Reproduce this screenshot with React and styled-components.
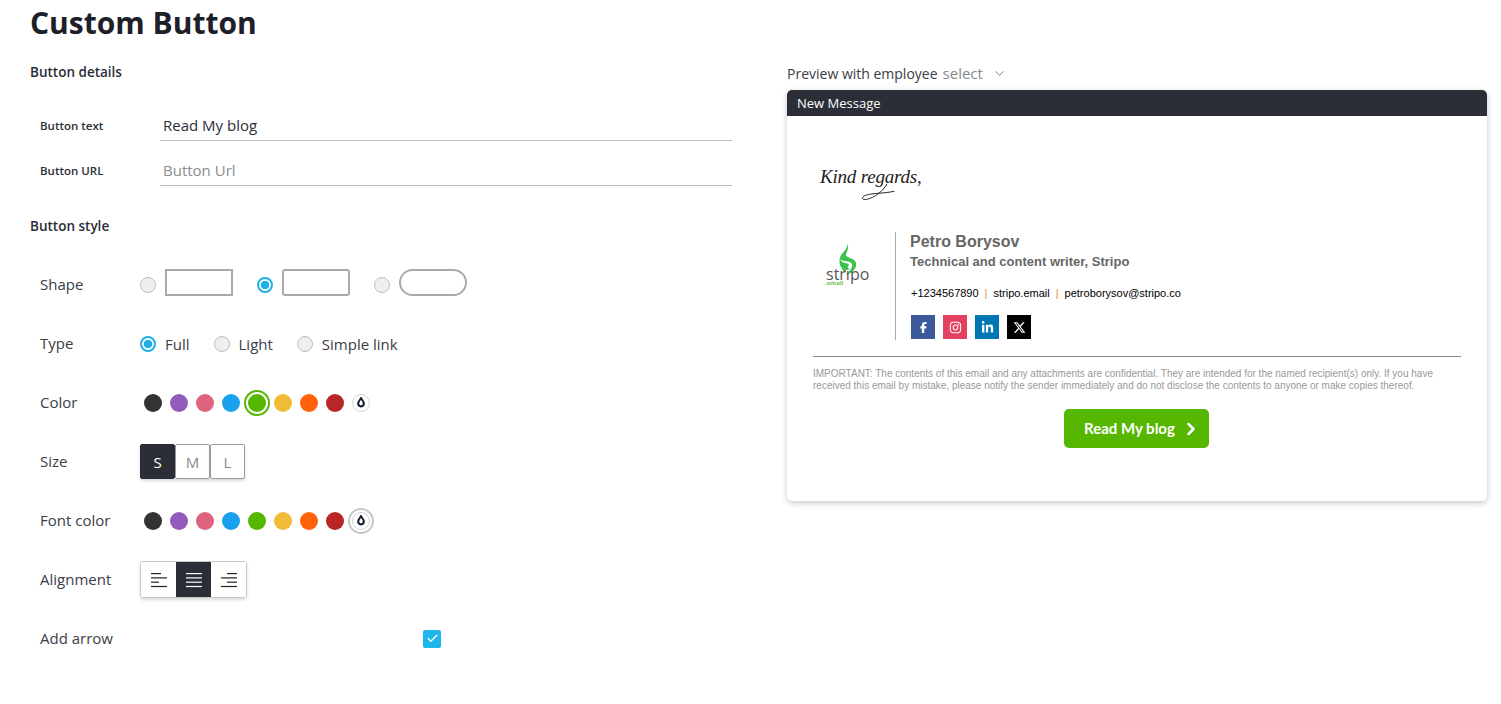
import React from "react";
import styled, { createGlobalStyle } from "styled-components";
import { FaFacebookF, FaInstagram, FaLinkedinIn, FaXTwitter } from "react-icons/fa6";
import { ChevronDown, ChevronRight, Check } from "lucide-react";

const COLORS = ["#333333", "#935cbb", "#e0637d", "#1ba1ec", "#55b700", "#f0bc35", "#ff6208", "#b82626"];

const GlobalStyle = createGlobalStyle`
  body {
    margin: 0;
    background: #fff;
    font-family: "Open Sans", "Lato", sans-serif;
    color: #2b2e37;
  }
`;

const Drop = () => (
  <svg width="10" height="11" viewBox="0 0 10 11">
    <path d="M5 1.2 C5.8 2.8 7.8 4.2 7.8 6.6 A2.8 2.8 0 0 1 2.2 6.6 C2.2 4.2 4.2 2.8 5 1.2 Z" fill="none" stroke="#101a2c" strokeWidth="2" />
  </svg>
);

const AlignIcon = ({ widths, side, color }) => (
  <svg width="16" height="16" viewBox="0 0 16 16">
    {widths.map((w, i) => {
      const x = side === "left" ? 0 : side === "right" ? 16 - w : (16 - w) / 2;
      return <rect key={i} x={x} y={1 + i * 4.3} width={w} height="1.2" fill={color} />;
    })}
  </svg>
);

const Palette = ({ selected, ring }) => (
  <Swatches>
    {COLORS.map((c) => (
      <SwatchCell key={c} $ring={selected === c ? c : null}>
        <Swatch $color={c} />
      </SwatchCell>
    ))}
    <SwatchCell $ring={ring}>
      <NoColor>
        <Drop />
      </NoColor>
    </SwatchCell>
  </Swatches>
);

const App = () => {
  return (
    <Page>
      <GlobalStyle />
      <LeftColumn>
        <Title>Custom Button</Title>
        <SectionTitle>Button details</SectionTitle>
        <Fields>
          <Field>
            <FieldLabel>Button text</FieldLabel>
            <FieldValue>Read My blog</FieldValue>
          </Field>
          <Field>
            <FieldLabel>Button URL</FieldLabel>
            <FieldValue $placeholder>Button Url</FieldValue>
          </Field>
        </Fields>
        <SectionTitle $top={30}>Button style</SectionTitle>
        <StyleRows>
          <StyleRow>
            <RowLabel>Shape</RowLabel>
            <Options>
              <Option>
                <Radio />
                <ShapeBox $radius={0} />
              </Option>
              <Option>
                <Radio $checked />
                <ShapeBox $radius={3} />
              </Option>
              <Option>
                <Radio />
                <ShapeBox $radius={14} />
              </Option>
            </Options>
          </StyleRow>
          <StyleRow>
            <RowLabel>Type</RowLabel>
            <Options>
              <Option>
                <Radio $checked />
                Full
              </Option>
              <Option>
                <Radio />
                Light
              </Option>
              <Option>
                <Radio />
                Simple link
              </Option>
            </Options>
          </StyleRow>
          <StyleRow>
            <RowLabel>Color</RowLabel>
            <Palette selected="#55b700" />
          </StyleRow>
          <StyleRow>
            <RowLabel>Size</RowLabel>
            <Segmented>
              <Segment $active>S</Segment>
              <Segment>M</Segment>
              <Segment>L</Segment>
            </Segmented>
          </StyleRow>
          <StyleRow>
            <RowLabel>Font color</RowLabel>
            <Palette ring="#c8c8c8" />
          </StyleRow>
          <StyleRow>
            <RowLabel>Alignment</RowLabel>
            <AlignGroup>
              <AlignCell>
                <AlignIcon widths={[10, 16, 8, 16]} side="left" color="#222" />
              </AlignCell>
              <AlignCell $active>
                <AlignIcon widths={[16, 16, 16, 16]} side="center" color="#fff" />
              </AlignCell>
              <AlignCell>
                <AlignIcon widths={[10, 16, 10, 16]} side="right" color="#222" />
              </AlignCell>
            </AlignGroup>
          </StyleRow>
          <StyleRow>
            <RowLabel>Add arrow</RowLabel>
            <Checkbox>
              <Check size={13} color="#fff" strokeWidth={2.5} />
            </Checkbox>
          </StyleRow>
        </StyleRows>
      </LeftColumn>
      <RightColumn>
        <PreviewBar>
          Preview with employee
          <SelectText>select</SelectText>
          <ChevronDown size={15} color="#777" strokeWidth={1.5} />
        </PreviewBar>
        <Card>
          <CardHeader>New Message</CardHeader>
          <CardBody>
            <Regards>
              <RegardsText>Kind regards,</RegardsText>
              <Flourish width="36" height="18" viewBox="0 0 44 22">
                <path d="M33 1 C28 10 18 18 8 20 C2 21 1 17 7 15 C16 12 30 13 42 10" fill="none" stroke="#222" strokeWidth="1.2" />
              </Flourish>
            </Regards>
            <Signature>
              <LogoCell>
                <Logo>
                  <Flame width="20" height="34" viewBox="0 0 20 34">
                    <path d="M10 0 C12 6 4 9 3 15 C2 19 14 17 15 21 C16 25 12 28 9 32 C15 30 20 26 19 20 C18 15 9 15 9 12 C9 9 13 6 10 0 Z" fill="#3cc14a" />
                    <path d="M3 15 C3 19 8 20 12 21 C11 25 9 27 8 30 C5 26 1 21 3 15 Z" fill="#3cc14a" />
                  </Flame>
                  <LogoWord>stripo</LogoWord>
                  <LogoSub>.email</LogoSub>
                </Logo>
              </LogoCell>
              <Info>
                <Name>Petro Borysov</Name>
                <Role>Technical and content writer, Stripo</Role>
                <Contacts>
                  +1234567890<Sep>|</Sep>stripo.email<Sep>|</Sep>petroborysov@stripo.co
                </Contacts>
                <Socials>
                  <Social $bg="#3b5998"><FaFacebookF size={11} /></Social>
                  <Social $bg="#e4405f"><FaInstagram size={13} /></Social>
                  <Social $bg="#0077b5"><FaLinkedinIn size={13} /></Social>
                  <Social $bg="#000"><FaXTwitter size={13} /></Social>
                </Socials>
              </Info>
            </Signature>
            <Divider />
            <Disclaimer>
              IMPORTANT: The contents of this email and any attachments are confidential. They are intended for the named recipient(s) only. If you have received this email by mistake, please notify the sender immediately and do not disclose the contents to anyone or make copies thereof.
            </Disclaimer>
            <CtaRow>
              <Cta>
                <CtaText>Read My blog</CtaText>
                <ChevronRight size={20} strokeWidth={3} />
              </Cta>
            </CtaRow>
          </CardBody>
        </Card>
      </RightColumn>
    </Page>
  );
};

const Page = styled.div`
  display: flex;
  width: 1501px;
  height: 704px;
  overflow: hidden;
  box-sizing: border-box;
  padding-left: 30px;
`;

const LeftColumn = styled.div`
  width: 702px;
  flex-shrink: 0;
`;

const Title = styled.h1`
  margin: 0;
  font-size: 30px;
  line-height: 46px;
  font-weight: 700;
  color: #1e2029;
`;

const SectionTitle = styled.h2`
  margin: ${(p) => p.$top || 16}px 0 0;
  font-size: 13.5px;
  line-height: 20px;
  font-weight: 600;
  color: #2b2e37;
`;

const Fields = styled.div`
  display: flex;
  flex-direction: column;
  gap: 15px;
  margin-top: 29px;
`;

const Field = styled.div`
  display: flex;
  align-items: center;
  padding-left: 10px;
`;

const FieldLabel = styled.label`
  width: 120px;
  flex-shrink: 0;
  padding-bottom: 2px;
  font-size: 11.5px;
  font-weight: 600;
`;

const FieldValue = styled.div`
  flex: 1;
  height: 29px;
  line-height: 29px;
  padding-left: 3px;
  border-bottom: 1px solid #bdbdbd;
  font-size: 15px;
  color: ${(p) => (p.$placeholder ? "#8a8d93" : "#2b2e37")};
`;

const StyleRows = styled.div`
  display: flex;
  flex-direction: column;
  margin-top: 19px;
  padding-left: 10px;
`;

const StyleRow = styled.div`
  display: flex;
  align-items: center;
  height: 59px;
`;

const RowLabel = styled.div`
  width: 100px;
  flex-shrink: 0;
  padding-bottom: 2px;
  font-size: 15px;
  color: #3a3d46;
`;

const Options = styled.div`
  display: flex;
  align-items: center;
  gap: 24px;
`;

const Option = styled.div`
  display: flex;
  align-items: center;
  gap: 9px;
  font-size: 15px;
  color: #3a3d46;
`;

const Radio = styled.span`
  box-sizing: border-box;
  width: 16px;
  height: 16px;
  border-radius: 50%;
  border: ${(p) => (p.$checked ? "2px solid #1fb0ea" : "1px solid #bdbdbd")};
  background: ${(p) => (p.$checked ? "radial-gradient(circle, #1fb0ea 0 4px, #fff 4.5px)" : "#efefef")};
`;

const ShapeBox = styled.span`
  box-sizing: border-box;
  width: 68px;
  height: 27px;
  margin-top: -5px;
  border: 2px solid #aaaaaa;
  border-radius: ${(p) => p.$radius}px;
`;

const Swatches = styled.div`
  display: flex;
`;

const SwatchCell = styled.div`
  box-sizing: border-box;
  width: 26px;
  height: 26px;
  display: flex;
  align-items: center;
  justify-content: center;
  border-radius: 50%;
  border: 2px solid ${(p) => p.$ring || "transparent"};
`;

const Swatch = styled.span`
  width: 18px;
  height: 18px;
  border-radius: 50%;
  background: ${(p) => p.$color};
`;

const NoColor = styled.span`
  box-sizing: border-box;
  width: 18px;
  height: 18px;
  border-radius: 50%;
  border: 1px solid #d5d5d5;
  background: #fff;
  display: flex;
  align-items: center;
  justify-content: center;
`;

const Segmented = styled.div`
  display: flex;
  height: 35px;
  border-radius: 3px;
  box-shadow: 0 2px 3px rgba(0, 0, 0, 0.15);
`;

const Segment = styled.div`
  box-sizing: border-box;
  width: 35px;
  display: flex;
  align-items: center;
  justify-content: center;
  font-size: 15px;
  border: 1px solid ${(p) => (p.$active ? "#2b2e37" : "#9a9a9a")};
  border-radius: 2px;
  background: ${(p) => (p.$active ? "#2b2e37" : "#fff")};
  color: ${(p) => (p.$active ? "#fff" : "#888b90")};
`;

const AlignGroup = styled.div`
  display: flex;
  height: 35px;
  border: 1px solid #c8c8c8;
  border-radius: 3px;
  box-shadow: 0 2px 3px rgba(0, 0, 0, 0.15);
  overflow: hidden;
`;

const AlignCell = styled.div`
  width: 35px;
  display: flex;
  align-items: center;
  justify-content: center;
  background: ${(p) => (p.$active ? "#2b2e37" : "#fff")};
`;

const Checkbox = styled.span`
  width: 18px;
  height: 18px;
  margin-left: 283px;
  border-radius: 2px;
  background: #1fb6ec;
  display: flex;
  align-items: center;
  justify-content: center;
`;

const RightColumn = styled.div`
  width: 700px;
  margin-left: 55px;
  padding-top: 63px;
  flex-shrink: 0;
`;

const PreviewBar = styled.div`
  display: flex;
  align-items: center;
  height: 20px;
  font-size: 14px;
  color: #3a3d46;
`;

const SelectText = styled.span`
  margin: 0 9px 0 5px;
  font-size: 15px;
  color: #85888e;
`;

const Card = styled.div`
  margin-top: 7px;
  height: 411px;
  border-radius: 5px;
  background: #fff;
  box-shadow: 0 2px 6px rgba(0, 0, 0, 0.22);
`;

const CardHeader = styled.div`
  height: 26px;
  line-height: 26px;
  padding-left: 10px;
  border-radius: 5px 5px 0 0;
  background: #2b2e37;
  color: #fff;
  font-size: 13px;
`;

const CardBody = styled.div`
  padding: 0 26px;
`;

const Regards = styled.div`
  position: relative;
  height: 116px;
  padding: 50px 0 0 7px;
  box-sizing: border-box;
`;

const RegardsText = styled.span`
  font-family: "Liberation Serif", serif;
  font-style: italic;
  font-size: 19px;
  letter-spacing: -0.2px;
  color: #222;
`;

const Flourish = styled.svg`
  position: absolute;
  left: 47px;
  top: 67px;
`;

const Signature = styled.div`
  display: flex;
  height: 108px;
`;

const LogoCell = styled.div`
  box-sizing: border-box;
  width: 83px;
  border-right: 1px solid #aaa;
  padding: 11px 0 0 12px;
`;

const Logo = styled.div`
  position: relative;
  width: 46px;
  height: 46px;
`;

const Flame = styled.svg`
  position: absolute;
  left: 12px;
  top: 0;
`;

const LogoWord = styled.div`
  position: absolute;
  left: 1px;
  top: 25px;
  font-size: 16px;
  line-height: 12px;
  color: #555;
`;

const LogoSub = styled.div`
  position: absolute;
  left: 0;
  top: 37px;
  font-size: 6px;
  line-height: 6px;
  font-weight: 700;
  color: #6cc24a;
`;

const Info = styled.div`
  padding: 1px 0 0 14px;
  font-family: "Liberation Sans", Arial, sans-serif;
`;

const Name = styled.div`
  font-size: 16px;
  line-height: 18px;
  font-weight: 700;
  color: #666;
`;

const Role = styled.div`
  margin-top: 3px;
  font-size: 13px;
  line-height: 16px;
  font-weight: 700;
  color: #666;
`;

const Contacts = styled.div`
  margin: 16px 0 0 1px;
  font-size: 11px;
  line-height: 14px;
  color: #000;
`;

const Sep = styled.span`
  margin: 0 6px;
  color: #e08a2e;
`;

const Socials = styled.div`
  display: flex;
  gap: 8px;
  margin: 15px 0 0 1px;
`;

const Social = styled.span`
  width: 24px;
  height: 24px;
  display: flex;
  align-items: center;
  justify-content: center;
  color: #fff;
  background: ${(p) => p.$bg};
`;

const Divider = styled.div`
  height: 1px;
  margin-top: 16px;
  background: #888;
`;

const Disclaimer = styled.p`
  margin: 11px 0 0 0;
  width: 640px;
  font-family: "Liberation Sans", Arial, sans-serif;
  font-size: 10px;
  line-height: 12px;
  color: #999;
`;

const CtaRow = styled.div`
  display: flex;
  justify-content: center;
  margin: 17px 1px 0 0;
`;

const Cta = styled.div`
  box-sizing: border-box;
  width: 145px;
  height: 39px;
  padding-left: 20px;
  display: flex;
  align-items: center;
  gap: 6px;
  border-radius: 5px;
  background: #55b700;
  color: #fff;
  font-family: "Lato", sans-serif;
  font-size: 15px;
  font-weight: 700;
`;

const CtaText = styled.span`
  padding-bottom: 2px;
`;

export default App;
